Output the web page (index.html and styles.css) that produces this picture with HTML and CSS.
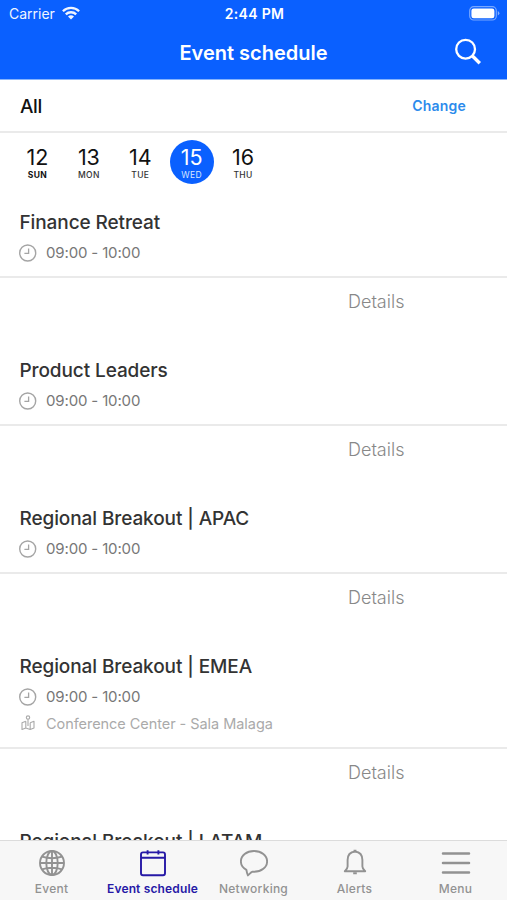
FILE: index.html
```html
<!DOCTYPE html>
<html lang="en">
<head>
<meta charset="utf-8">
<title>Event schedule</title>
<link rel="stylesheet" href="styles.css">
</head>
<body>
<svg class="sprite" width="0" height="0" aria-hidden="true">
  <symbol id="clock" viewBox="0 0 18 18"><circle cx="8.700" cy="9" r="8" fill="none" stroke="currentColor" stroke-width="1.4"/><path d="M9.600 4.400V9.400H5.400" fill="none" stroke="currentColor" stroke-width="1.300"/></symbol>
  <symbol id="place" viewBox="0 0 14 16"><g fill="none" stroke="currentColor" stroke-width="1.1" stroke-linejoin="round"><circle cx="7" cy="2.600" r="1.700"/><path d="M7 4.300V11M4.800 6.300 1 7.800V14.500L4.800 13 9.200 14.500 13 13V6.300L9.200 7.800M4.800 6.300V13M9.200 7.800V14.500"/></g></symbol>
</svg>
<div class="app">
  <header class="header">
    <div class="status">
      <div class="carrier"><span class="carrier-name">Carrier</span>
        <svg class="wifi" width="18" height="14" viewBox="0 0 18 14"><g fill="none" stroke="#fff" stroke-width="2.300"><path d="M.9 5.200a11.600 11.600 0 0 1 16.200 0"/><path d="M3.800 8.400a7.400 7.400 0 0 1 10.400 0"/></g><path d="M9 13.600 6 10.600a4.300 4.300 0 0 1 6 0Z" fill="#fff"/></svg>
      </div>
      <span class="clock-time">2:44 PM</span>
      <svg class="battery" width="31" height="15" viewBox="0 0 31 15"><rect x=".7" y=".7" width="26.600" height="13.300" rx="4" fill="none" stroke="#fff" stroke-opacity=".45" stroke-width="1.200"/><rect x="2.400" y="2.400" width="23" height="9.800" rx="2.300" fill="#fff"/><path d="M28.800 5v4.600q1.600-.8 1.600-2.300T28.800 5Z" fill="#fff" fill-opacity=".5"/></svg>
    </div>
    <div class="navbar">
      <h1 class="title">Event schedule</h1>
      <svg class="search" width="28" height="28" viewBox="0 0 28 28" fill="none" stroke="#fff"><circle cx="11.600" cy="11.200" r="9.400" stroke-width="2.300"/><path d="M18.200 17.800 25.800 25.200" stroke-width="3.400"/></svg>
    </div>
  </header>
  <div class="filter"><span class="filter-name">All</span><span class="change">Change</span></div>
  <div class="days">
    <div class="day first"><b>12</b><small>SUN</small></div>
    <div class="day"><b>13</b><small>MON</small></div>
    <div class="day"><b>14</b><small>TUE</small></div>
    <div class="day active"><b>15</b><small>WED</small></div>
    <div class="day"><b>16</b><small>THU</small></div>
  </div>
  <main class="list">
    <section class="event">
      <div class="info"><h2>Finance Retreat</h2><div class="time"><svg width="18" height="18"><use href="#clock"/></svg><span>09:00 - 10:00</span></div></div>
      <div class="more"><span>Details</span></div>
    </section>
    <section class="event">
      <div class="info"><h2>Product Leaders</h2><div class="time"><svg width="18" height="18"><use href="#clock"/></svg><span>09:00 - 10:00</span></div></div>
      <div class="more"><span>Details</span></div>
    </section>
    <section class="event">
      <div class="info"><h2>Regional Breakout | APAC</h2><div class="time"><svg width="18" height="18"><use href="#clock"/></svg><span>09:00 - 10:00</span></div></div>
      <div class="more"><span>Details</span></div>
    </section>
    <section class="event">
      <div class="info"><h2>Regional Breakout | EMEA</h2><div class="time"><svg width="18" height="18"><use href="#clock"/></svg><span>09:00 - 10:00</span></div>
        <div class="place"><svg width="14" height="16"><use href="#place"/></svg><span>Conference Center - Sala Malaga</span></div></div>
      <div class="more"><span>Details</span></div>
    </section>
    <section class="event">
      <div class="info"><h2>Regional Breakout | LATAM</h2></div>
    </section>
  </main>
  <nav class="tabs">
    <div class="tab"><svg width="28" height="28" viewBox="0 0 28 28" fill="none" stroke="currentColor" stroke-width="1.900"><circle cx="14" cy="14" r="12"/><ellipse cx="14" cy="14" rx="5.700" ry="12"/><path d="M14 2v24M2 14h24M4 7.700q10 3 20 0M4 20.300q10-3 20 0"/></svg><span>Event</span></div>
    <div class="tab current"><svg width="28" height="28" viewBox="0 0 28 28" fill="none" stroke="currentColor" stroke-width="1.900"><rect x="2" y="3.400" width="24" height="22.800" rx="2"/><path d="M2 8.800h24M8.600 1.200v4.400M19.400 1.200v4.400"/></svg><span>Event schedule</span></div>
    <div class="tab"><svg width="28" height="28" viewBox="0 0 28 28" fill="none" stroke="currentColor" stroke-width="1.900" stroke-linejoin="round"><path d="M14 2C6.600 2 .9 6.500.9 12.400c0 3.600 2 6.500 5.500 8.400.3 2 .5 3.700 1.500 5.600 2-1.800 3.300-3.300 4.600-3.700l1.500.1c7.400 0 13.100-4.500 13.100-10.400S21.400 2 14 2Z"/></svg><span>Networking</span></div>
    <div class="tab"><svg width="28" height="28" viewBox="0 0 28 28" fill="none" stroke="currentColor" stroke-width="1.900" stroke-linejoin="round"><path d="M14 2.500c-5 .6-7.400 4-7.400 8.500v6.500c0 2-1.200 3-2.800 4.700h20.400c-1.600-1.700-2.800-2.700-2.800-4.700V11c0-4.500-2.400-7.900-7.400-8.500Z"/><path d="M12.600 1.700h2.800M12.200 24.200h3.600" stroke-width="2"/></svg><span>Alerts</span></div>
    <div class="tab"><svg width="30" height="28" viewBox="0 0 30 28" stroke="currentColor" stroke-width="2.500" stroke-linecap="round"><path d="M2 4.600h26M2 14h26M2 23.400h26"/></svg><span>Menu</span></div>
  </nav>
</div>
</body>
</html>
```
FILE: styles.css
```css
* { box-sizing: border-box; }
body { margin: 0; font-family: Inter, "Liberation Sans", sans-serif; background: #fff; color: #111; }
h1, h2 { margin: 0; }
span, b, small, h1, h2 { white-space: nowrap; }
.sprite { display: block; }
.app { height: 900px; display: flex; flex-direction: column; overflow: hidden; }
.header { flex: none; height: 80px; background: #0a60ff; color: #fff; border-bottom: 1px solid #86b3fc; }
.status { height: 27px; display: grid; grid-template-columns: 1fr auto 1fr; align-items: center; padding: 0 7px 1px 9px; font-size: 14px; }
.carrier { display: flex; align-items: center; gap: 7px; opacity: .94; }
.clock-time { font-size: 14px; font-weight: 600; letter-spacing: .3px; padding-top: 1px; }
.battery { justify-self: end; }
.navbar { height: 50px; display: grid; grid-template-columns: 1fr auto 1fr; align-items: center; padding: 0 25px; }
.title { grid-column: 2; font-size: 20px; font-weight: 600; padding-top: 1px; }
.search { justify-self: end; }
.filter { flex: none; height: 53px; display: flex; justify-content: space-between; align-items: center; padding: 1px 41px 0 20px; border-bottom: 2px solid #eaeaea; }
.filter-name { font-size: 19px; font-weight: 500; letter-spacing: -.4px; }
.change { font-size: 14px; font-weight: 600; color: #2c8bec; letter-spacing: .2px; padding-bottom: 2px; }
.days { flex: none; height: 71px; padding: 7px 0 0 15.5px; display: flex; gap: 7.4px; }
.day { width: 44px; height: 44px; border-radius: 50%; display: flex; flex-direction: column; align-items: center; }
.day b { font-size: 21.5px; line-height: 24px; font-weight: 400; margin-top: 5px; }
.day small { font-size: 8.5px; line-height: 10px; font-weight: 500; letter-spacing: .4px; margin-top: 1px; color: #333; }
.day.first small { font-weight: 700; color: #111; }
.day.active { background: #0a60ff; color: #fff; }
.day.active small { color: #d8e6ff; font-weight: 400; }
.list { flex: 1; min-height: 0; overflow: hidden; }
.info { padding: 7px 19px 14px; border-bottom: 2px solid #eaeaea; }
.info h2 { font-size: 19px; line-height: 24px; font-weight: 500; letter-spacing: -.1px; color: #333; margin-left: .5px; }
.time { margin-top: 7px; height: 20px; display: flex; align-items: center; gap: 9px; font-size: 15px; letter-spacing: -.15px; color: #777; }
.time svg { color: #a5a5a5; margin-top: 1px; }
.place { margin-top: 7px; height: 20px; display: flex; align-items: center; gap: 11px; font-size: 14.5px; letter-spacing: -.05px; color: #aaa; padding-left: 2px; }
.more { height: 74px; padding: 12px 0 0 348px; font-size: 18px; line-height: 24px; font-weight: 300; color: #888; }
.tabs { flex: none; height: 60px; background: #f7f7f7; border-top: 1px solid #dcdcdc; display: grid; grid-template-columns: repeat(5, 101px); padding-left: 1px; }
.tab { display: flex; flex-direction: column; align-items: center; color: #929292; padding-top: 8px; }
.tab span { font-size: 12px; line-height: 16px; margin-top: 4px; font-weight: 500; letter-spacing: .25px; }
.tab.current { color: #2619a6; }
.tab.current span { font-weight: 600; letter-spacing: .15px; }
```
